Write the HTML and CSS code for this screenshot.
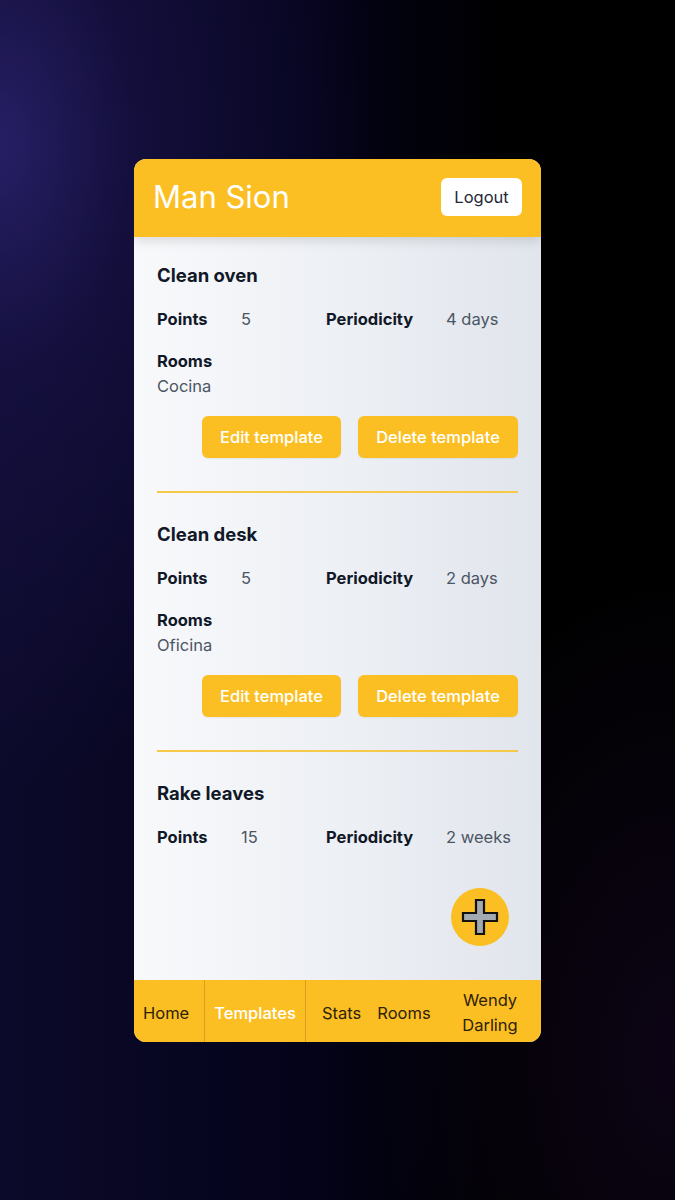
FILE: index.html
```html
<!DOCTYPE html>
<html lang="en">
<head>
<meta charset="utf-8">
<title>Man Sion - Templates</title>
<link rel="stylesheet" href="styles.css">
</head>
<body>
<div class="app">
  <header class="topbar">
    <h1 class="brand">Man Sion</h1>
    <button class="logout">Logout</button>
  </header>
  <main class="content">
    <section class="template">
      <h2 class="t-title">Clean oven</h2>
      <div class="t-row">
        <span class="lbl">Points</span><span class="val">5</span>
        <span class="lbl">Periodicity</span><span class="val">4 days</span>
      </div>
      <div class="t-rooms">
        <span class="lbl">Rooms</span>
        <span class="val room">Cocina</span>
      </div>
      <div class="t-actions">
        <button class="btn btn-edit">Edit template</button>
        <button class="btn btn-del">Delete template</button>
      </div>
    </section>
    <section class="template">
      <h2 class="t-title">Clean desk</h2>
      <div class="t-row">
        <span class="lbl">Points</span><span class="val">5</span>
        <span class="lbl">Periodicity</span><span class="val">2 days</span>
      </div>
      <div class="t-rooms">
        <span class="lbl">Rooms</span>
        <span class="val room">Oficina</span>
      </div>
      <div class="t-actions">
        <button class="btn btn-edit">Edit template</button>
        <button class="btn btn-del">Delete template</button>
      </div>
    </section>
    <section class="template last">
      <h2 class="t-title">Rake leaves</h2>
      <div class="t-row">
        <span class="lbl">Points</span><span class="val">15</span>
        <span class="lbl">Periodicity</span><span class="val">2 weeks</span>
      </div>
    </section>
    <button class="fab" aria-label="Add template">
      <svg width="38" height="38" viewBox="0 0 38 38">
        <polygon points="15,2 23,2 23,15 36,15 36,23 23,23 23,36 15,36 15,23 2,23 2,15 15,15" fill="#a3a9b0" stroke="#111111" stroke-width="2.2" stroke-linejoin="miter"/>
      </svg>
    </button>
  </main>
  <nav class="bottomnav">
    <a class="nav-item nav-home sep">Home</a>
    <a class="nav-item nav-templates sep active">Templates</a>
    <a class="nav-item nav-stats">Stats</a>
    <a class="nav-item nav-rooms">Rooms</a>
    <a class="nav-item nav-user">Wendy Darling</a>
  </nav>
</div>
</body>
</html>
```

FILE: styles.css
```css
* { box-sizing: border-box; }
html, body { margin: 0; padding: 0; }
body {
  min-height: 1200px;
  display: flex;
  align-items: center;
  justify-content: center;
  font-family: Inter, "Noto Sans", sans-serif;
  background:
    radial-gradient(ellipse 380px 650px at 0% 12%, rgba(40,32,104,0.95) 0%, rgba(24,18,70,0.7) 35%, rgba(10,8,36,0) 100%),
    radial-gradient(ellipse 300px 500px at 100% 88%, rgba(18,6,30,0.7) 0%, rgba(0,0,0,0) 100%),
    linear-gradient(to right, #0c0a2a 0%, #04031a 45%, #000000 75%);
}
.app {
  width: 407px;
  height: 883px;
  border-radius: 12px;
  overflow: hidden;
  display: flex;
  flex-direction: column;
  background: linear-gradient(to right, #f8f9fb 0%, #eceff4 55%, #e1e5ec 100%);
}
.topbar {
  height: 78px;
  flex: none;
  background: #fbbf24;
  display: flex;
  align-items: center;
  justify-content: space-between;
  padding: 0 19px 2px 19px;
  position: relative;
  z-index: 2;
  box-shadow: 0 4px 10px rgba(0,0,0,0.12);
}
.brand {
  margin: 0;
  font-size: 31px;
  font-weight: 400;
  color: #ffffff;
}
.logout {
  font-family: inherit;
  font-size: 16.5px;
  color: #1f2937;
  background: #ffffff;
  border: none;
  border-radius: 6px;
  height: 38px;
  width: 81px;
  padding: 0;
}
.content {
  flex: 1;
  position: relative;
  overflow: hidden;
  padding: 24px 23px 0 23px;
}
.template {
  padding-bottom: 33px;
  border-bottom: 2px solid #f7c948;
  margin-bottom: 27px;
}
.template.last { border-bottom: none; padding-bottom: 0; }
.t-title {
  margin: 0 0 18px 0;
  font-size: 18.5px;
  line-height: 28px;
  font-weight: 700;
  color: #111827;
}
.t-row {
  display: grid;
  grid-template-columns: 84px 85px 120px auto;
  line-height: 24px;
}
.lbl { font-weight: 700; color: #111827; font-size: 16.5px; }
.val { font-weight: 400; color: #4b5563; font-size: 16.5px; }
.t-rooms {
  margin-top: 18px;
  display: flex;
  flex-direction: column;
  line-height: 24px;
}
.room { margin-top: 1px; }
.t-actions {
  margin-top: 18px;
  display: flex;
  justify-content: flex-end;
  gap: 17px;
}
.btn {
  font-family: inherit;
  font-size: 16.5px;
  font-weight: 500;
  color: #ffffff;
  background: #fbbf24;
  border: none;
  border-radius: 6px;
  height: 42px;
  padding: 0;
  box-shadow: 0 1px 2px rgba(0,0,0,0.06);
}
.btn-edit { width: 139px; }
.btn-del { width: 160px; }
.fab {
  position: absolute;
  right: 32px;
  bottom: 34px;
  width: 58px;
  height: 58px;
  border-radius: 50%;
  border: none;
  background: #fbbf24;
  display: flex;
  align-items: center;
  justify-content: center;
  padding: 0;
}
.bottomnav {
  height: 62px;
  flex: none;
  background: #fbbf24;
  display: flex;
  align-items: stretch;
  font-size: 16.5px;
  color: #2e2208;
  line-height: 25px;
}
.nav-item {
  display: flex;
  align-items: center;
  justify-content: center;
  text-align: center;
  padding-top: 5px;
}
.sep { border-right: 1px solid #d9a11a; }
.nav-home { width: 71px; justify-content: flex-start; padding-left: 9px; }
.nav-templates { width: 101px; }
.nav-templates.active { color: #ffffff; font-weight: 500; }
.nav-stats { margin-left: 16px; }
.nav-rooms { margin-left: 16px; }
.nav-user { margin-left: auto; margin-right: 22px; width: 58px; }
```
